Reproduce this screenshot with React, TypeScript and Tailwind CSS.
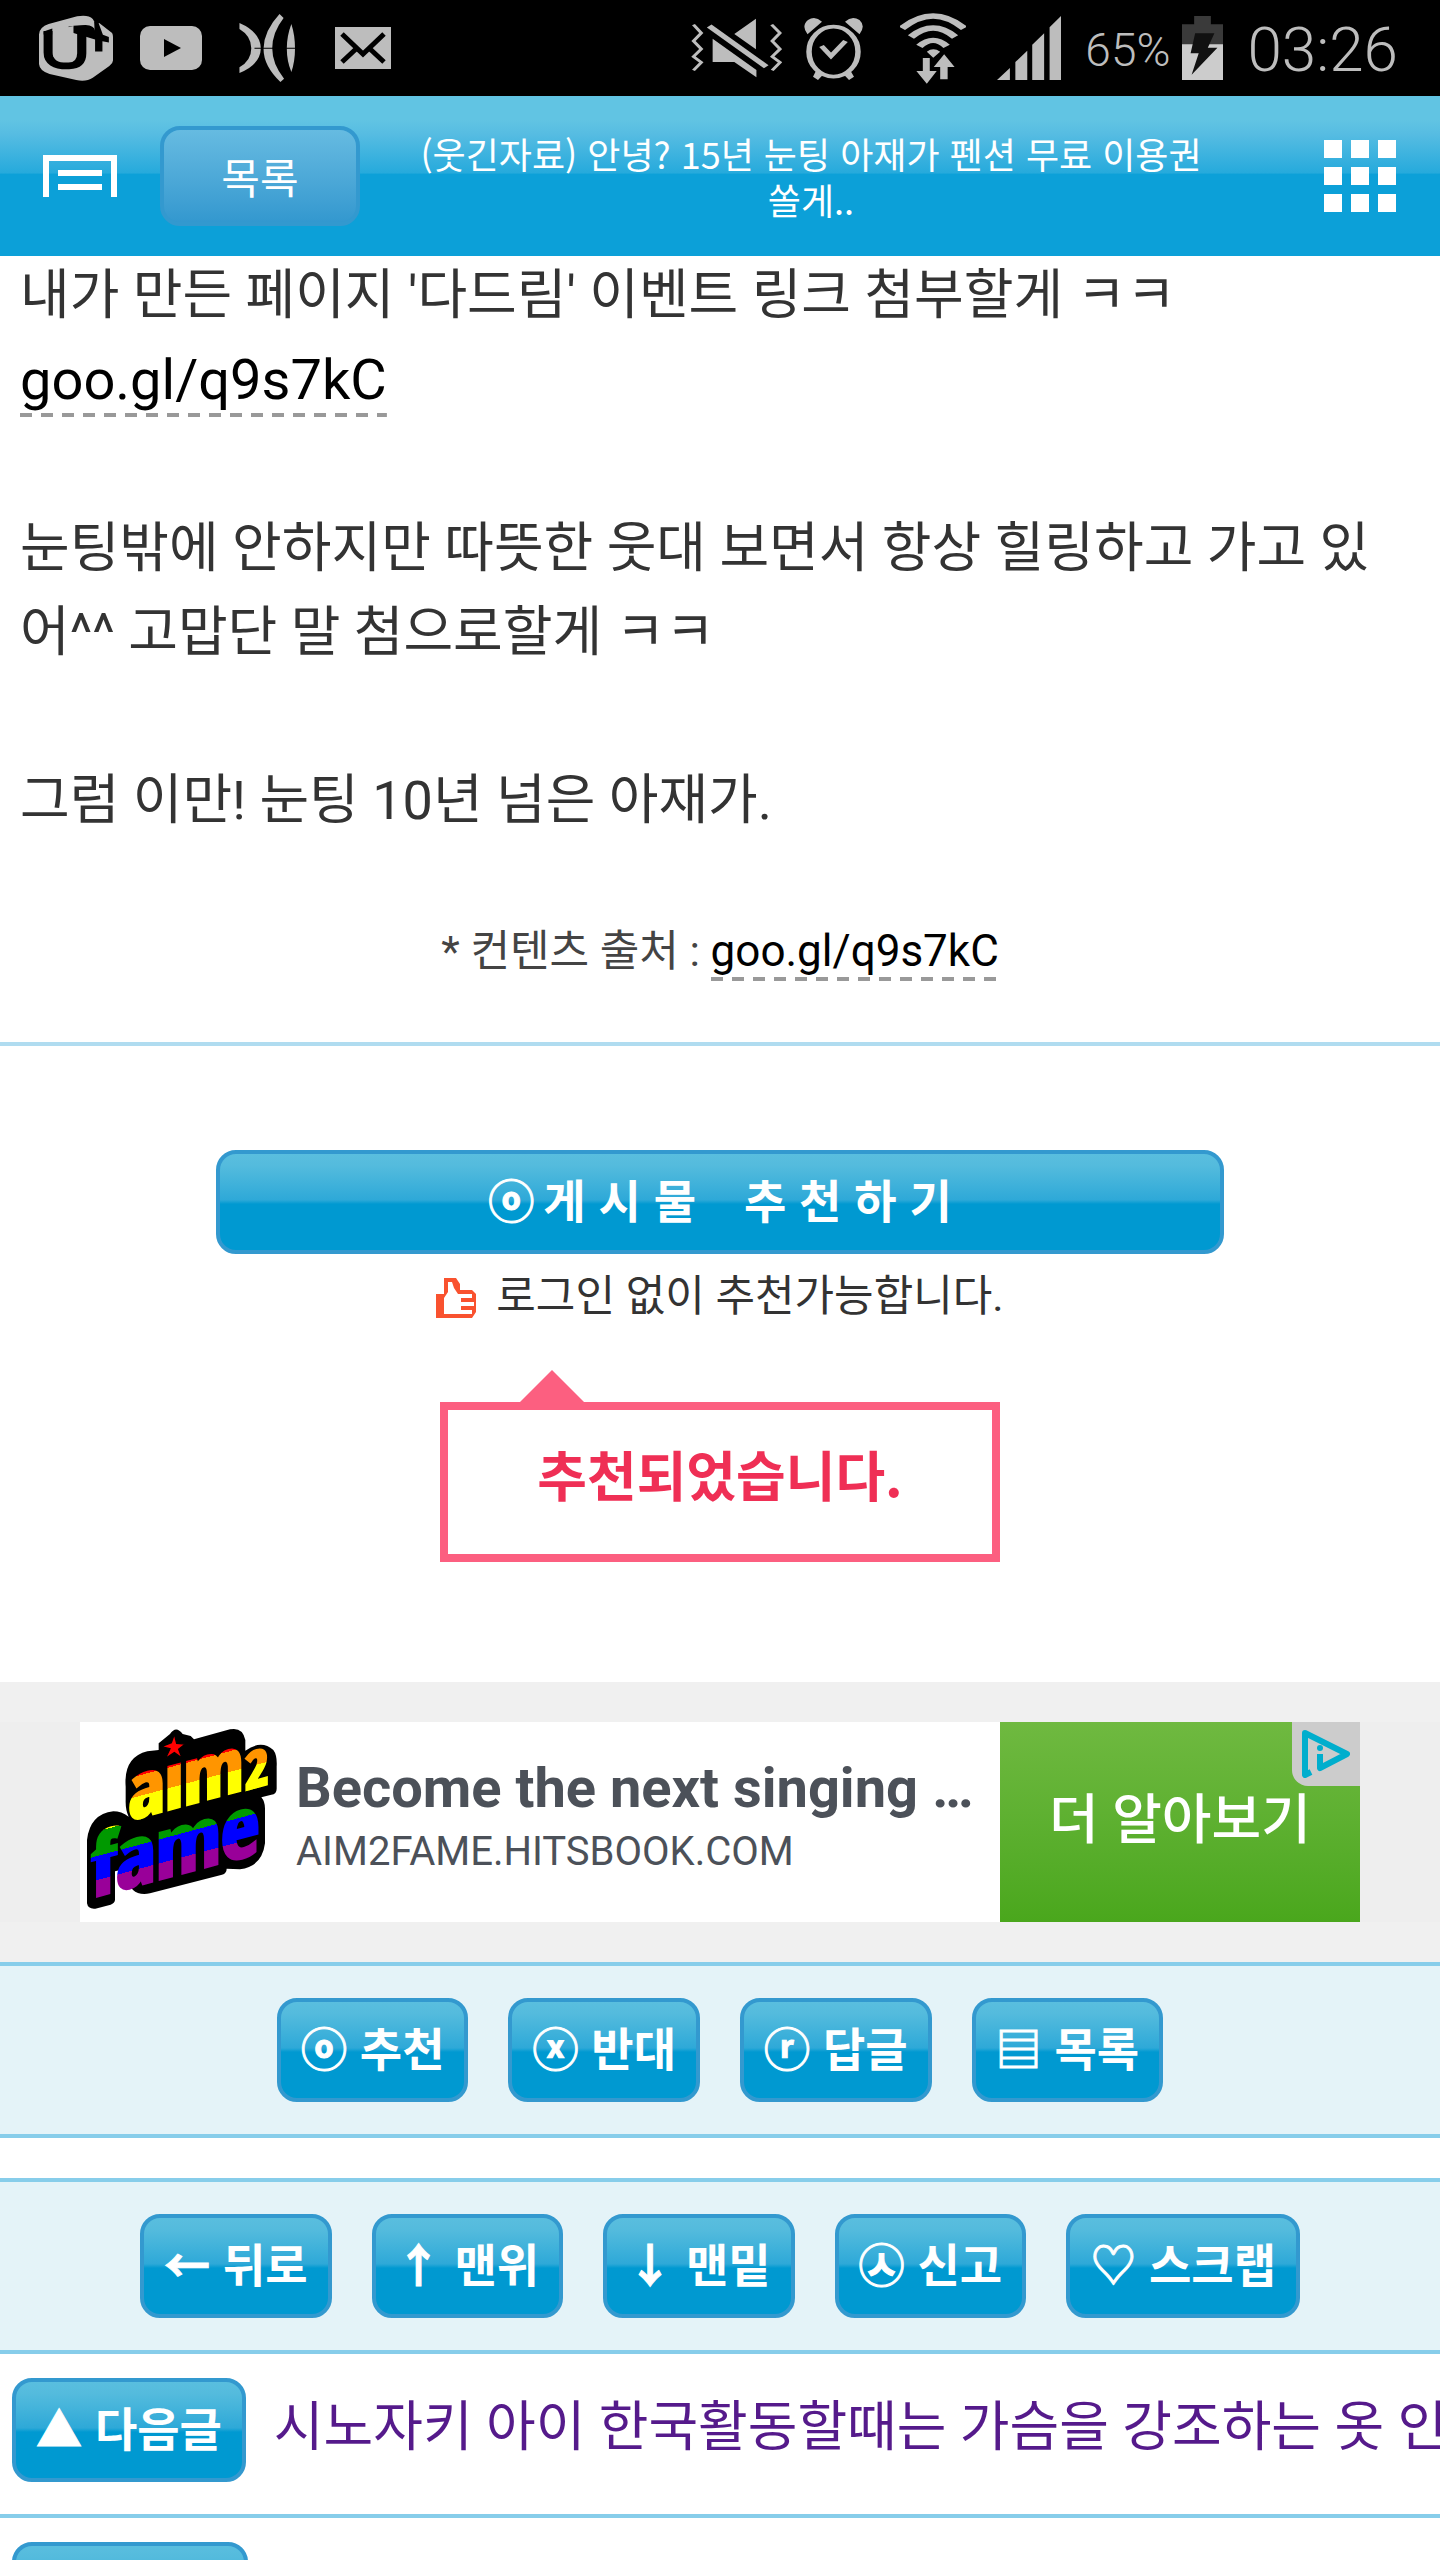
import React from "react";

const ROBOTO = "font-[Roboto,'Noto_Sans_CJK_KR',sans-serif]";
const CJK = "font-['Noto_Sans_CJK_KR',sans-serif]";
const DASHED =
  "bg-[repeating-linear-gradient(90deg,#999_0_12px,transparent_12px_21px)] bg-[length:100%_4px] bg-bottom bg-no-repeat pb-1 text-black";

type GlossProps = {
  icon?: string;
  label?: string;
  name?: string;
  className?: string;
};

function GlossButton({ icon, label, name, className = "" }: GlossProps) {
  return (
    <button
      type="button"
      aria-label={name}
      className={`h-[104px] shrink-0 whitespace-pre rounded-[20px] border-4 border-[#3399cf] bg-[linear-gradient(#5bbfdf_0%,#54bbdd_15%,#2ea9d8_48%,#0099d1_52%,#0099d1_100%)] bg-origin-border px-5 pb-2 text-[46px] leading-none font-bold text-white ${CJK} ${className}`}
    >
      {icon && <span className="[-webkit-text-stroke:1px_white]">{icon}</span>}
      {label}
    </button>
  );
}

function StatusBar() {
  return (
    <div className="flex h-24 items-center bg-black pr-[42px] pl-[39px] text-[#bdbdbd]">
      <svg className="h-[66px] w-[74px]" viewBox="85 46 161 197" preserveAspectRatio="none">
        <path fill="#bdbdbd" d="M106 73 L168 50 Q192 44 202 58 L208 72 L216 70 L244 100 Q246 104 246 112 V182 Q246 190 238 198 L202 233 Q188 246 166 240 L108 222 Q86 212 85 192 V104 Q86 82 106 73 Z" />
        <path fill="none" stroke="#000" strokeWidth="20" d="M105 94 V158 Q105 200 150 198 Q178 196 178 160 V88 L150 90" />
        <path fill="#000" d="M114 86 L95 95 V104 H114 Z M160 78 L186 76 Q206 78 206 92 L205 66 L214 68 L224 105 L237 112 V128 L223 124 V155 H207 V119 L160 100 Z" />
        <path fill="#bdbdbd" d="M160 80 V180 Q158 184 148 182 Q116 182 115 164 V92 L160 79 Z" />
      </svg>
      <svg className="ml-[27px] h-[44px] w-[62px]" viewBox="0 0 62 44">
        <rect width="62" height="44" rx="10" fill="#bdbdbd" />
        <path d="M24 13 L41 22 L24 31 Z" fill="#000" />
      </svg>
      <svg className="ml-[37px] h-[68px] w-[56px]" viewBox="519 42 123 204" preserveAspectRatio="none">
        <path fill="#bdbdbd" d="M520 69 Q566 96 567 145 Q566 194 520 219 V202 Q546 182 546 145 Q546 108 520 87 Z M608 42 L617 54 Q592 98 592 145 Q592 192 618 236 L610 246 Q572 196 573 145 Q574 92 608 42 Z M634 72 Q642 106 642 145 Q642 184 634 216 Q624 184 624 145 Q624 108 634 72 Z" />
        <path d="M553 145 H642" stroke="#000" strokeWidth="3" />
      </svg>
      <svg className="ml-10 h-[42px] w-14" viewBox="0 0 56 42">
        <rect width="56" height="42" fill="#bdbdbd" />
        <path d="M7 7 L28 27 L49 7 M7 35 L22 21 M49 35 L34 21" fill="none" stroke="#000" strokeWidth="5" />
      </svg>
      <div className="ml-auto flex items-center">
        <svg className="h-[60px] w-[91px]" viewBox="56 54 185 180" preserveAspectRatio="none">
          <g fill="none" stroke="#bdbdbd" strokeWidth="7">
            <path d="M61 74 L77 99 L61 123 L77 147 L61 170 L77 187 L61 211" />
            <path d="M220 74 L237 99 L221 123 L237 147 L221 170 L237 187 L221 211" />
            <path d="M93 78 L209 200" strokeWidth="13" />
          </g>
          <path fill="#bdbdbd" d="M188 56 V148 L144 102 Z M100 116 L189 210 V232 L144 186 H100 Z" />
        </svg>
        <svg className="ml-[22px] h-[63px] w-[59px]" viewBox="284 51 118 189" preserveAspectRatio="none">
          <ellipse cx="343" cy="155" rx="49" ry="75" fill="none" stroke="#bdbdbd" strokeWidth="11" />
          <path d="M319 138 L338 168 L367 123" fill="none" stroke="#bdbdbd" strokeWidth="11" />
          <path fill="#bdbdbd" d="M291 103 Q278 78 292 60 Q306 46 320 65 Z M395 103 Q408 78 395 60 Q380 46 366 65 Z M308 212 L322 224 L312 240 L302 230 Z M377 212 L364 224 L374 240 L384 230 Z" />
        </svg>
        <svg className="ml-[37px] h-[71px] w-[66px]" viewBox="476 36 133 213" preserveAspectRatio="none">
          <g fill="none" stroke="#bdbdbd" strokeWidth="16">
            <path d="M480 82 Q543 8 605 82" />
            <path d="M498 108 Q543 54 587 108" />
            <path d="M515 136 Q543 100 570 136" />
          </g>
          <path fill="#bdbdbd" d="M530 152 Q543 138 557 152 L543 170 Z M522 171 H536 V210 H550 L530 248 L509 210 H522 Z M565 160 L586 198 H572 V235 H557 V198 H544 Z" />
        </svg>
        <svg className="ml-[31px] h-16 w-16" viewBox="671 48 129 192" preserveAspectRatio="none">
          <path fill="#bdbdbd" d="M671 240 L697 204 V240 Z M708 240 V186 L732 152 V240 Z M742 240 V134 L766 100 V240 Z M777 240 V82 L800 48 V240 Z" />
        </svg>
        <span className="ml-6 pt-1 font-[Roboto,sans-serif] text-[46px] leading-none font-light">65%</span>
        <svg className="ml-3 h-16 w-[41px]" viewBox="1047 44 81 193" preserveAspectRatio="none">
          <path d="M1047 69 H1071 V44 H1104 V69 H1128 V237 H1047 Z" fill="#3a3a3a" />
          <path d="M1047 129 H1128 V237 H1047 Z" fill="#cccccc" />
          <path d="M1073 96 H1111 L1098 140 H1117 L1066 221 L1080 156 H1064 Z" fill="#111" />
        </svg>
        <span className="ml-6 pt-1 font-[Roboto,sans-serif] text-[62px] leading-none font-light">03:26</span>
      </div>
    </div>
  );
}

function Header() {
  return (
    <header
      className={`flex h-40 items-center bg-[linear-gradient(#61c4e3_0%,#61c4e3_15%,#56bce2_24%,#26aadc_48%,#0ca0d8_49%)] pr-11 pl-[43px] text-white ${CJK}`}
    >
      <button type="button" aria-label="메뉴" className="shrink-0">
        <svg className="h-[42px] w-[74px]" viewBox="0 0 74 42">
          <path d="M3 42 V3 H71 V42" fill="none" stroke="#fff" strokeWidth="6" />
          <path d="M15 18 H59 M15 32 H59" stroke="#fff" strokeWidth="6" />
        </svg>
      </button>
      <button
        type="button"
        className="ml-[43px] h-[100px] w-[200px] shrink-0 rounded-[20px] border-4 border-[#3399cf] bg-linear-to-b from-[#66bbe1] to-[#3398cf] text-[42px] leading-none"
      >
        목록
      </button>
      <h1 className="flex-1 pr-[90px] pl-7 text-center text-[36px] leading-[46px] break-keep">
        (웃긴자료) 안녕? 15년 눈팅 아재가 펜션 무료 이용권 쏠게..
      </h1>
      <button type="button" aria-label="전체 메뉴" className="grid shrink-0 grid-cols-3 gap-[9px]">
        {Array.from({ length: 9 }, (_, i) => (
          <span key={i} className="size-[18px] bg-white" />
        ))}
      </button>
    </header>
  );
}

function Article() {
  return (
    <article className={`border-b-4 border-[#b0dcf0] text-[#333] ${ROBOTO}`}>
      <div className="-mt-0.5 pr-10 pl-5 text-[54px] leading-[84px]">
        <p>
          내가 만든 페이지 '다드림' 이벤트 링크 첨부할게 ㅋㅋ
          <br />
          <a href="#event" className={`text-[56px] ${DASHED}`}>
            goo.gl/q9s7kC
          </a>
        </p>
        <p className="mt-[84px] break-all">
          눈팅밖에 안하지만 따뜻한 웃대 보면서 항상 힐링하고 가고 있어^^ 고맙단 말 첨으로할게 ㅋㅋ
        </p>
        <p className="mt-[84px]">그럼 이만! 눈팅 10년 넘은 아재가.</p>
      </div>
      <p className="pt-[74px] pb-[57px] text-center text-[43px] leading-[68px] text-[#444]">
        * 컨텐츠 출처 :{" "}
        <a href="#source" className={`text-[44px] ${DASHED}`}>
          goo.gl/q9s7kC
        </a>
      </p>
    </article>
  );
}

function Recommend() {
  return (
    <section className="pt-[104px] pb-[120px] text-center">
      <GlossButton
        className="w-[70%]"
        icon="ⓞ"
        label={"\u2009게 시 물\u00a0\u00a0 \u2009추 천 하 기"}
      />
      <p className={`mt-2 flex items-center justify-center gap-5 text-[43px] leading-[68px] text-[#333] ${ROBOTO}`}>
        <svg className="mt-1 size-10" viewBox="0 0 20 20">
          <path d="M0 8 H4 V0 H10 L12 3 V6 H18 L20 8 V17 L18 20 H0 Z" fill="#f9522f" />
          <path d="M4 10 L6 7 V2 H8 L9 5 L11 8 H18 V10 H12 V12 H19 V14 H12 V16 H18 V18 H4 Z" fill="#fff" />
          <path d="M12 8 V16" stroke="#fff" strokeWidth="1" />
        </svg>
        <span>로그인 없이 추천가능합니다.</span>
      </p>
      <div className="relative mx-auto mt-[72px] w-fit border-8 border-[#fc5f80] px-[89px] pt-6 pb-10">
        <svg className="absolute -top-10 left-[72px] h-8 w-16" viewBox="0 0 64 32">
          <path d="M32 0 L64 32 H0 Z" fill="#fc5f80" />
        </svg>
        <p className={`text-[54px] leading-[80px] font-bold text-[#ef2f55] ${CJK}`}>추천되었습니다.</p>
      </div>
    </section>
  );
}

function AdLogo() {
  return (
    <svg className="size-[200px] shrink-0" viewBox="60 156 600 600" role="img" aria-label="aim2fame">
      <defs>
        <linearGradient id="rainbow" gradientUnits="userSpaceOnUse" x1="0" y1="300" x2="0" y2="700">
          <stop offset="0.2" stopColor="#f00" />
          <stop offset="0.2" stopColor="#ff9500" />
          <stop offset="0.355" stopColor="#ff9500" />
          <stop offset="0.355" stopColor="#ff0" />
          <stop offset="0.535" stopColor="#ff0" />
          <stop offset="0.535" stopColor="#090" />
          <stop offset="0.72" stopColor="#090" />
          <stop offset="0.72" stopColor="#00f" />
          <stop offset="0.9" stopColor="#00f" />
          <stop offset="0.9" stopColor="#909" />
        </linearGradient>
      </defs>
      <path
        d="M330 192 Q348 165 368 192 L392 198 L402 208 L510 178 Q548 170 556 210 V242 Q604 208 640 240 Q652 256 650 290 V356 Q650 372 634 374 L604 382 Q616 396 615 420 V520 Q606 590 540 598 L500 596 Q500 610 486 614 L270 670 Q214 682 198 620 V596 L165 604 V690 Q164 700 152 704 L106 716 Q84 718 81 700 V510 Q90 432 160 424 Q184 424 206 440 Q196 420 197 390 V350 Q190 262 262 244 L296 240 V220 Z"
        fill="#000"
      />
      <g
        className="font-['Open_Sans_Condensed','Liberation_Sans_Narrow',Roboto,sans-serif] font-bold"
        transform="skewY(-15)"
        fill="url(#rainbow)"
        stroke="url(#rainbow)"
        strokeWidth="10"
      >
        <text x="206" y="506" fontSize="232">aım</text>
        <text x="556" y="508" fontSize="150">2</text>
        <text x="94" y="708" fontSize="252">fame</text>
      </g>
      <path d="M343 192 L350 220 L376 222 L356 238 L366 264 L343 248 L316 266 L330 236 L304 230 L334 218 Z" fill="#f00" stroke="#000" strokeWidth="4" />
    </svg>
  );
}

function AdBanner() {
  return (
    <aside className="bg-[#f0f0f0] py-10">
      <div className="flex justify-center bg-[#eeeeee]">
        <a href="#ad" className={`relative flex h-[200px] w-[1280px] bg-white ${ROBOTO}`}>
          <AdLogo />
          <span className="flex min-w-0 flex-1 flex-col pt-7 pl-4 text-[#4c5159]">
            <span className="truncate text-[56px] leading-[76px] font-bold">Become the next singing …</span>
            <span className="text-[40px] leading-[52px]">AIM2FAME.HITSBOOK.COM</span>
          </span>
          <span className="flex w-[360px] shrink-0 items-center justify-center bg-linear-to-b from-[#6fb940] to-[#4aa71c] pb-1 text-[54px] font-medium text-white">
            더 알아보기
          </span>
          <span className="absolute top-0 right-0 flex h-16 w-[68px] items-center justify-center rounded-bl-2xl bg-[#cccccc]">
            <svg className="h-12 w-12" viewBox="0 0 48 48">
              <path d="M9 42 L3 45 V3 L45 24 L18 38 V24" fill="none" stroke="#00aecd" strokeWidth="6" strokeLinejoin="round" />
              <circle cx="18" cy="18" r="3" fill="#00aecd" />
            </svg>
          </span>
        </a>
      </div>
    </aside>
  );
}

function Bar({ items, className = "" }: { items: [string, string][]; className?: string }) {
  return (
    <nav className={`flex justify-center gap-10 border-y-4 border-[#87cdea] bg-[#e4f3f8] py-8 ${className}`}>
      {items.map(([icon, label]) => (
        <GlossButton key={label} icon={icon} label={` ${label}`} />
      ))}
    </nav>
  );
}

export default function App() {
  return (
    <div lang="ko" className="h-screen overflow-hidden bg-white">
      <StatusBar />
      <Header />
      <main>
        <Article />
        <Recommend />
        <AdBanner />
        <Bar
          items={[
            ["ⓞ", "추천"],
            ["ⓧ", "반대"],
            ["ⓡ", "답글"],
            ["▤", "목록"],
          ]}
        />
        <Bar
          className="mt-10"
          items={[
            ["←", "뒤로"],
            ["↑", "맨위"],
            ["↓", "맨밑"],
            ["㉦", "신고"],
            ["♡", "스크랩"],
          ]}
        />
        <div className="flex items-start overflow-hidden border-b-4 border-[#87cdea] pt-6 pb-8 pl-3">
          <GlossButton icon="▲" label=" 다음글" />
          <a href="#next" className={`ml-7 pt-2 text-[54px] leading-[84px] whitespace-nowrap text-[#551a8b] ${ROBOTO}`}>
            시노자키 아이 한국활동할때는 가슴을 강조하는 옷 인
          </a>
        </div>
        <div className="pt-6 pl-3">
          <GlossButton name="이전글" className="w-[236px]" />
        </div>
      </main>
    </div>
  );
}
